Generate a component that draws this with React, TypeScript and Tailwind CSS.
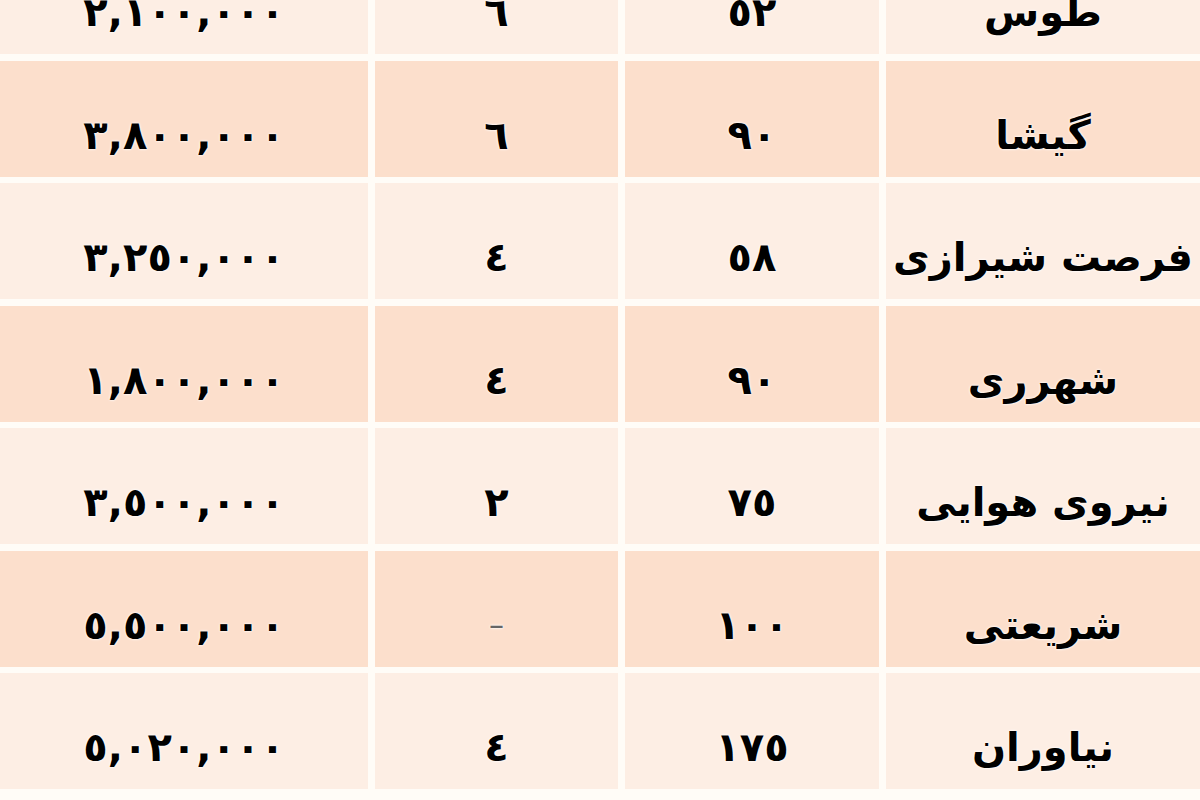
const rows = [
  { name: "طوس", area: "٥٢", count: "٦", price: "٢,١٠٠,٠٠٠" },
  { name: "گیشا", area: "٩٠", count: "٦", price: "٣,٨٠٠,٠٠٠" },
  { name: "فرصت شیرازی", area: "٥٨", count: "٤", price: "٣,٢٥٠,٠٠٠" },
  { name: "شهرری", area: "٩٠", count: "٤", price: "١,٨٠٠,٠٠٠" },
  { name: "نیروی هوایی", area: "٧٥", count: "٢", price: "٣,٥٠٠,٠٠٠" },
  { name: "شریعتی", area: "١٠٠", count: "–", price: "٥,٥٠٠,٠٠٠" },
  { name: "نیاوران", area: "١٧٥", count: "٤", price: "٥,٠٢٠,٠٠٠" },
]

export default function App() {
  return (
    <div
      dir="rtl"
      className="w-[1200px] h-[800px] overflow-hidden bg-[#fffcf7] font-['DejaVu_Sans',sans-serif] text-black"
    >
      <div className="-mt-[62px] flex flex-col gap-[6.5px]">
        {rows.map((r, i) => {
          const bg = i % 2 === 0 ? "bg-[#fdeee4]" : "bg-[#fcdfcc]"
          const cell = `${bg} flex items-center justify-center pt-8 [text-shadow:0_0_3px_#fff,0_0_2px_#fff]`
          return (
            <div key={r.name} className="flex h-[116px] gap-[7px]">
              {/* name */}
              <div className={`${cell} flex-1 text-[40px] font-bold whitespace-nowrap`}>{r.name}</div>
              {/* area */}
              <div className={`${cell} w-[254px] shrink-0 text-[40px] font-bold tracking-[3px]`}>{r.area}</div>
              {/* rooms */}
              <div className={`${cell} w-[243px] shrink-0 text-[40px] font-bold`}>
                {r.count === "–" ? <span className="font-normal text-[30px] text-[#666]">{r.count}</span> : r.count}
              </div>
              {/* price */}
              <div className={`${cell} w-[368px] shrink-0 text-[40px] font-bold tracking-[5px]`}>{r.price}</div>
            </div>
          )
        })}
      </div>
    </div>
  )
}
